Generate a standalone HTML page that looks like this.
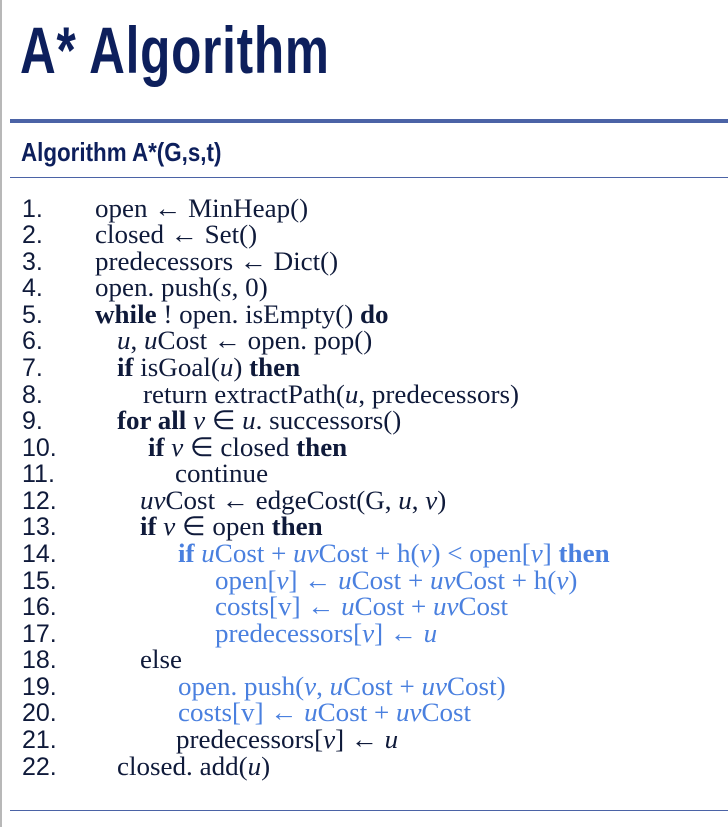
<!DOCTYPE html>
<html><head><meta charset="utf-8"><style>
body{margin:0;width:728px;height:827px;background:#fff;position:relative;overflow:hidden;font-family:"Liberation Serif",serif;}
.lb{position:absolute;left:0;top:0;width:2px;height:827px;background:#b8b8b8}
h1{position:absolute;left:20px;top:12px;margin:0;font:bold 66px "Liberation Sans Narrow","Liberation Sans",sans-serif;color:#0d1f5c;transform:scaleX(0.75);transform-origin:left;letter-spacing:1px}
.r1{position:absolute;left:10px;right:0;top:119px;height:4px;background:#4b63a6}
.sub{position:absolute;left:21px;top:137px;font:bold 26px "Liberation Sans Narrow","Liberation Sans",sans-serif;color:#0d1f5c;transform:scaleX(0.86);transform-origin:left}
.r2{position:absolute;left:10px;right:0;top:177px;height:1px;background:#4b63a6}
.r3{position:absolute;left:10px;right:0;top:810px;height:1px;background:#4b63a6}
.n{position:absolute;left:22px;font:25px "Liberation Sans",sans-serif;color:#0f1a3a;transform:scaleX(1.0);transform-origin:left;line-height:26px}
.c{position:absolute;font-size:26.5px;color:#0f1a3a;line-height:26px;white-space:nowrap;transform:scaleX(1.02);transform-origin:left}
.b{color:#4a80df}
i{font-style:italic}
</style></head><body>
<div class="lb"></div>
<h1>A* Algorithm</h1>
<div class="r1"></div>
<div class="sub">Algorithm A*(G,s,t)</div>
<div class="r2"></div>
<div class="n" style="top:196px">1.</div>
<div class="n" style="top:222px">2.</div>
<div class="n" style="top:249px">3.</div>
<div class="n" style="top:275px">4.</div>
<div class="n" style="top:302px">5.</div>
<div class="n" style="top:328px">6.</div>
<div class="n" style="top:355px">7.</div>
<div class="n" style="top:382px">8.</div>
<div class="n" style="top:408px">9.</div>
<div class="n" style="top:435px">10.</div>
<div class="n" style="top:461px">11.</div>
<div class="n" style="top:488px">12.</div>
<div class="n" style="top:514px">13.</div>
<div class="n" style="top:541px">14.</div>
<div class="n" style="top:568px">15.</div>
<div class="n" style="top:594px">16.</div>
<div class="n" style="top:621px">17.</div>
<div class="n" style="top:647px">18.</div>
<div class="n" style="top:674px">19.</div>
<div class="n" style="top:700px">20.</div>
<div class="n" style="top:727px">21.</div>
<div class="n" style="top:754px">22.</div>
<div class="c" style="top:195px;left:95px">open ← MinHeap()</div>
<div class="c" style="top:221px;left:95px">closed ← Set()</div>
<div class="c" style="top:248px;left:95px">predecessors ← Dict()</div>
<div class="c" style="top:274px;left:95px">open. push(<i>s</i>, 0)</div>
<div class="c" style="top:301px;left:95px"><b>while</b> ! open. isEmpty() <b>do</b></div>
<div class="c" style="top:327px;left:117px"><i>u</i>, <i>u</i>Cost ← open. pop()</div>
<div class="c" style="top:354px;left:117px"><b>if</b> isGoal(<i>u</i>) <b>then</b></div>
<div class="c" style="top:381px;left:143px">return extractPath(<i>u</i>, predecessors)</div>
<div class="c" style="top:407px;left:117px"><b>for all</b> <i>v</i> ∈ <i>u</i>. successors()</div>
<div class="c" style="top:434px;left:148px"><b>if</b> <i>v</i> ∈ closed <b>then</b></div>
<div class="c" style="top:460px;left:175px">continue</div>
<div class="c" style="top:487px;left:140px"><i>uv</i>Cost ← edgeCost(G, <i>u</i>, <i>v</i>)</div>
<div class="c" style="top:513px;left:140px"><b>if</b> <i>v</i> ∈ open <b>then</b></div>
<div class="c b" style="top:540px;left:178px"><b>if</b> <i>u</i>Cost + <i>uv</i>Cost + h(<i>v</i>) &lt; open[<i>v</i>] <b>then</b></div>
<div class="c b" style="top:567px;left:215px">open[<i>v</i>] ← <i>u</i>Cost + <i>uv</i>Cost + h(<i>v</i>)</div>
<div class="c b" style="top:593px;left:215px">costs[v] ← <i>u</i>Cost + <i>uv</i>Cost</div>
<div class="c b" style="top:620px;left:215px">predecessors[<i>v</i>] ← <i>u</i></div>
<div class="c" style="top:646px;left:140px">else</div>
<div class="c b" style="top:673px;left:178px">open. push(<i>v</i>, <i>u</i>Cost + <i>uv</i>Cost)</div>
<div class="c b" style="top:699px;left:178px">costs[v] ← <i>u</i>Cost + <i>uv</i>Cost</div>
<div class="c" style="top:726px;left:176px">predecessors[<i>v</i>] ← <i>u</i></div>
<div class="c" style="top:753px;left:117px">closed. add(<i>u</i>)</div>
<div class="r3"></div>
</body></html>
